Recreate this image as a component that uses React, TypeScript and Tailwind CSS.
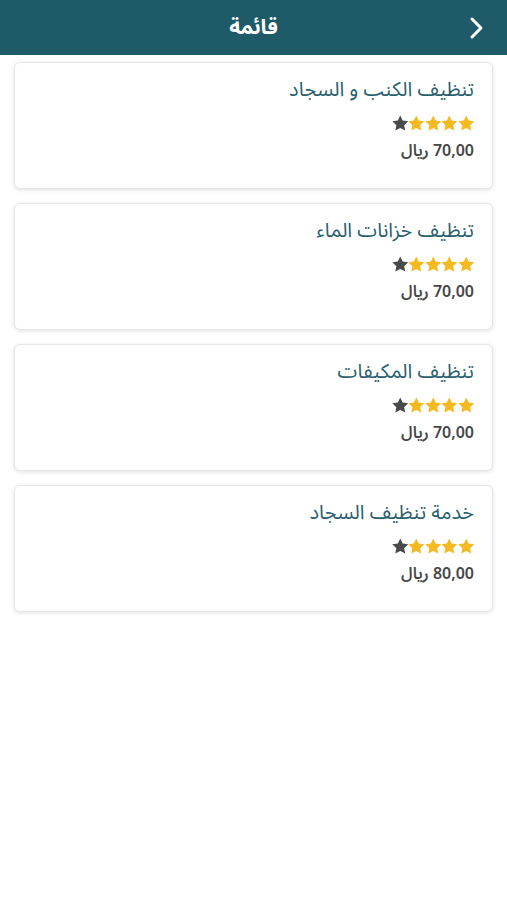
import React from "react";

const items = [
  { title: "تنظيف الكنب و السجاد", price: "70,00" },
  { title: "تنظيف خزانات الماء", price: "70,00" },
  { title: "تنظيف المكيفات", price: "70,00" },
  { title: "خدمة تنظيف السجاد", price: "80,00" },
];

function Star({ color }: { color: string }) {
  return (
    <svg width="16.5" height="17" viewBox="0.5 0 23 24">
      <path
        d="M12 0.8l3.4 7.1 7.8 1-5.7 5.4 1.5 7.7L12 18.2l-7 3.8 1.5-7.7L.8 8.9l7.8-1z"
        fill={color}
      />
    </svg>
  );
}

export default function App() {
  return (
    <div
      className="min-h-[900px] bg-white"
      style={{ fontFamily: '"Noto Sans Arabic", "DejaVu Sans", "Noto Sans", sans-serif' }}
      dir="rtl"
    >
      <div className="relative h-[55px] bg-[#1f5a68] flex items-center justify-center">
        <span className="text-white text-[21px] font-bold">قائمة</span>
        <svg
          className="absolute right-[22px] top-[16px]"
          width="16"
          height="24"
          viewBox="0 0 16 24"
        >
          <path d="M3 3l9 9-9 9" stroke="white" strokeWidth="3" fill="none" strokeLinecap="round" strokeLinejoin="round" />
        </svg>
      </div>
      <div className="flex flex-col gap-[14px] px-[14px] pt-[7px]">
        {items.map((it, i) => (
          <div
            key={i}
            className="h-[127px] bg-white rounded-[6px] border border-[#e6e6e6] shadow-[0_1px_4px_rgba(0,0,0,0.12)] pr-[18px] pt-[13px] flex flex-col items-start"
          >
            <div className="text-[20px] text-[#2a5f6e] leading-[28px]">{it.title}</div>
            <div className="flex flex-row mt-[11px] gap-0" dir="rtl">
              <Star color="#f5b921" />
              <Star color="#f5b921" />
              <Star color="#f5b921" />
              <Star color="#f5b921" />
              <Star color="#4a4a4a" />
            </div>
            <div className="mt-[8px] text-[16px] font-semibold text-[#474747] leading-[22px]">
              {it.price} ريال
            </div>
          </div>
        ))}
      </div>
    </div>
  );
}
